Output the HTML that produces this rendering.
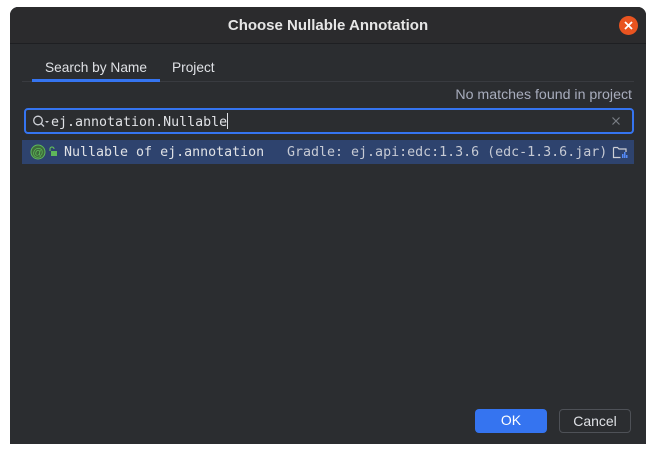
<!DOCTYPE html>
<html><head><meta charset="utf-8"><style>
*{margin:0;padding:0;box-sizing:border-box}
body{width:656px;height:454px;background:#fff;position:relative;overflow:hidden;font-family:"Liberation Sans",sans-serif}
.dlg{position:absolute;left:10px;top:7px;width:636px;height:437px;background:#2b2d30;border-radius:8px 8px 0 0;overflow:hidden}
.title{height:37px;background:#2b2b2d;border-bottom:1px solid #1e1f22;color:#e6e6e6;font-weight:bold;font-size:15px;text-align:center;line-height:38px}
.close{position:absolute;left:609px;top:9px;width:19px;height:19px;border-radius:50%;background:#e95420}
.tab{position:absolute;top:53px;font-size:13.7px;color:#dfe1e5}
.ul{position:absolute;left:22px;top:72px;width:128px;height:3px;background:#3574f0}
.sep{position:absolute;left:12px;top:74px;width:612px;height:1px;background:#393b40}
.nm{position:absolute;right:14px;top:80px;font-size:14.2px;color:#a8adbd}
.field{position:absolute;left:14px;top:101px;width:610px;height:26px;border:2px solid #3574f0;border-radius:4px;background:#2b2d30}
.mono{font-family:"DejaVu Sans Mono","Liberation Mono",monospace;font-size:13.3px}
.field .t{position:absolute;left:25px;top:3px;color:#dfe1e5}
.cur{display:inline-block;width:1px;height:16px;background:#dfe1e5;vertical-align:-3px}
.row{position:absolute;left:12px;top:133px;width:612px;height:24px;background:#2e436e}
.row .a{position:absolute;left:42px;top:5px;color:#dfe1e5}
.row .b{position:absolute;left:265px;top:5px;color:#c6cad4}
.btn{position:absolute;top:402px;height:24px;border-radius:4px;font-size:14px;color:#fff;text-align:center;line-height:23px}
</style></head><body>
<div class="dlg">
<div class="title">Choose Nullable Annotation</div>
<div class="close"><svg width="19" height="19"><path d="M6 6L13 13M13 6L6 13" stroke="#fff" stroke-width="1.8"/></svg></div>
<div class="tab" style="left:35px">Search by Name</div>
<div class="tab" style="left:162px">Project</div>
<div class="sep"></div><div class="ul"></div>
<div class="nm">No matches found in project</div>
<div class="field">
<svg style="position:absolute;left:6px;top:4px" width="18" height="16"><circle cx="6" cy="6.5" r="4.3" fill="none" stroke="#ced0d6" stroke-width="1.3"/><path d="M9 9.5L12 12.5" stroke="#ced0d6" stroke-width="1.3"/><path d="M13 7h4l-2 2z" fill="#ced0d6"/></svg>
<div class="t mono">ej.annotation.Nullable<span class="cur"></span></div>
<svg style="position:absolute;left:585px;top:6px" width="10" height="10"><path d="M1.5 1.5L8.5 8.5M8.5 1.5L1.5 8.5" stroke="#7a7e85" stroke-width="1.2"/></svg>
</div>
<div class="row">
<svg style="position:absolute;left:8px;top:4px" width="32" height="16"><circle cx="8" cy="8" r="7" fill="#3d6b3a" stroke="#5fb85a" stroke-width="1"/><text x="8" y="12" font-size="11" font-family="Liberation Sans" fill="#5fb85a" text-anchor="middle">@</text><path d="M20 7v-2a2 2 0 0 1 4 0" fill="none" stroke="#5fb85a" stroke-width="1.2"/><rect x="21" y="7" width="6" height="5" fill="#5fb85a"/></svg>
<div class="a mono">Nullable of ej.annotation</div>
<div class="b mono">Gradle: ej.api:edc:1.3.6 (edc-1.3.6.jar)</div>
<svg style="position:absolute;left:590px;top:4px" width="16" height="16"><path d="M1.5 3.5h4l1.5 1.5h7v3M1.5 3.5v10h7" fill="none" stroke="#ced0d6" stroke-width="1.2"/><rect x="10" y="10" width="1.5" height="4" fill="#548af7"/><rect x="12" y="8" width="1.5" height="6" fill="#548af7"/><rect x="14" y="11" width="1.5" height="3" fill="#548af7"/></svg>
</div>
<div class="btn" style="left:465px;width:72px;background:#3574f0">OK</div>
<div class="btn" style="left:549px;width:72px;border:1px solid #4e5157;color:#dfe1e5">Cancel</div>
</div>
</body></html>
